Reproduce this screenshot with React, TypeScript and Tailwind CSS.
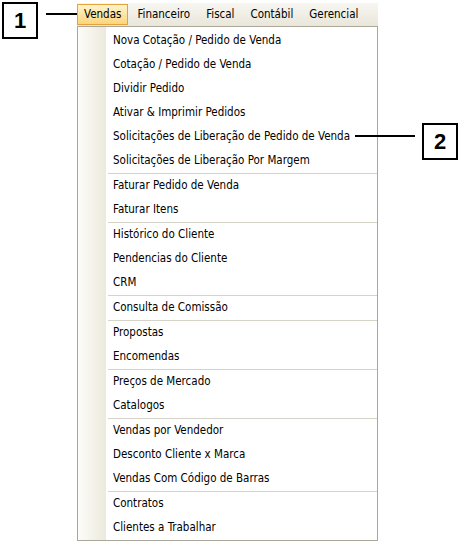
import React from "react";

type Entry = string | null;

// null = separator line
const items: Entry[] = [
  "Nova Cotação / Pedido de Venda",
  "Cotação / Pedido de Venda",
  "Dividir Pedido",
  "Ativar & Imprimir Pedidos",
  "Solicitações de Liberação de Pedido de Venda",
  "Solicitações de Liberação Por Margem",
  null,
  "Faturar Pedido de Venda",
  "Faturar Itens",
  null,
  "Histórico do Cliente",
  "Pendencias do Cliente",
  "CRM",
  null,
  "Consulta de Comissão",
  null,
  "Propostas",
  "Encomendas",
  null,
  "Preços de Mercado",
  "Catalogos",
  null,
  "Vendas por Vendedor",
  "Desconto Cliente x Marca",
  "Vendas Com Código de Barras",
  null,
  "Contratos",
  "Clientes a Trabalhar",
];

const menus = ["Vendas", "Financeiro", "Fiscal", "Contábil", "Gerencial"];

function Callout({ n, className }: { n: string; className: string }) {
  return (
    <div
      className={`absolute w-[36px] h-[37px] border-2 border-black bg-white flex items-center justify-center text-[22px] font-bold text-black font-['Liberation_Sans',Arial,sans-serif] ${className}`}
    >
      {n}
    </div>
  );
}

export default function App() {
  return (
    <div className="relative w-[463px] h-[543px] bg-white text-[11.5px] text-black font-['DejaVu_Sans_Condensed','DejaVu_Sans',Tahoma,sans-serif]">
      <div className="ml-[77px] pt-[3px] w-[301px]">
        {/* Menu bar */}
        <div className="flex gap-[2px] h-[23px] items-stretch bg-gradient-to-b from-[#f7f6f1] to-[#e9e6da]">
          {menus.map((m, i) => (
            <div
              key={m}
              className={`flex items-center px-[6px] ${
                i === 0
                  ? "border border-[#e5a13a] bg-gradient-to-b from-[#fff4cc] to-[#fbd57b] my-[1px]"
                  : "border border-transparent"
              }`}
            >
              {m}
            </div>
          ))}
        </div>

        {/* Dropdown */}
        <div className="flex border border-[#aca899] bg-white">
          <div className="w-[28px] bg-gradient-to-r from-[#fdfcf9] to-[#ece9dc]" />
          <div className="flex-1 pt-[2px]">
            {items.map((it, i) =>
              it === null ? (
                <div key={i} className="h-px ml-[2px] bg-[#d6d3c9]" />
              ) : (
                <div key={i} className="h-[24px] flex items-center pl-[7px]">
                  {it}
                </div>
              )
            )}
          </div>
        </div>
      </div>

      {/* Callouts */}
      <Callout n="1" className="left-[2px] top-[2px]" />
      <div className="absolute left-[46px] top-[13px] w-[31px] h-[2px] bg-black" />
      <div className="absolute left-[355px] top-[135px] w-[60px] h-[2px] bg-black" />
      <Callout n="2" className="left-[422px] top-[123px]" />
    </div>
  );
}
